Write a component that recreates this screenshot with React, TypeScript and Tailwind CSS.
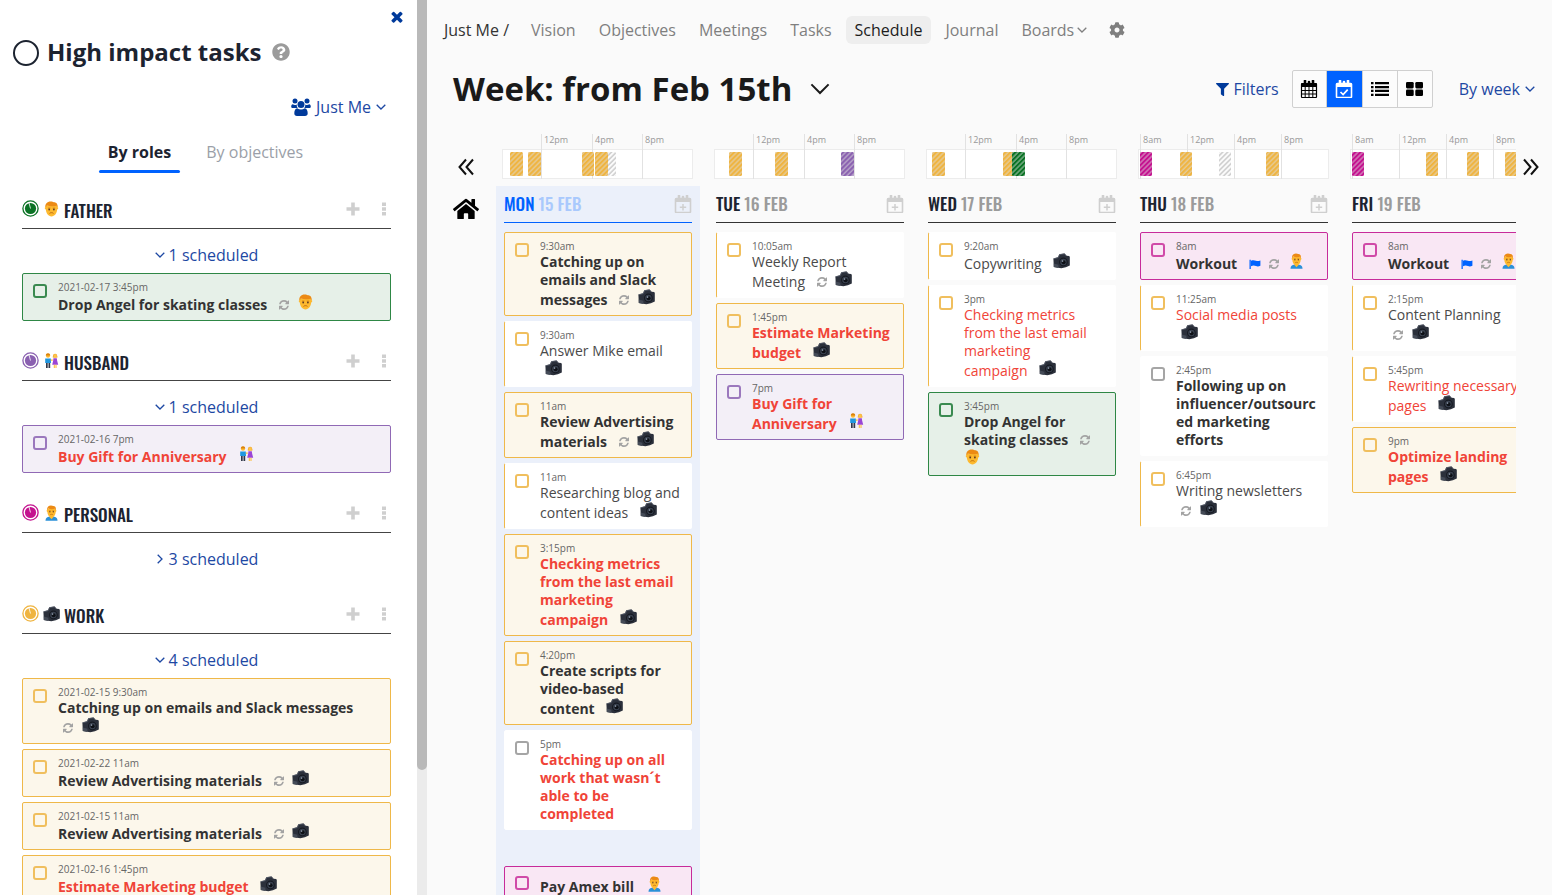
import { useState } from "react";
import type { ReactNode } from "react";
import clsx from "clsx";
import { FaCog, FaFilter, FaHome, FaQuestionCircle } from "react-icons/fa";

type Role = "work" | "father" | "husband" | "personal" | "none";

type Task = {
  time?: string;
  title: string;
  role: Role;
  important?: boolean; // filled card with a full border
  bold?: boolean;
  late?: boolean;
  repeat?: boolean;
  flag?: boolean;
  iconsBelow?: boolean;
};

type Day = {
  name: string;
  date: string;
  today?: boolean;
  marks: { x: number; label: string }[];
  blocks: { x: number; w: number; role: Role }[];
  tasks: Task[];
  untimed?: Task[];
};

const nineToMidnight = [
  { x: 39, label: "12pm" },
  { x: 90, label: "4pm" },
  { x: 140, label: "8pm" },
];

const eightToMidnight = [
  { x: 2, label: "8am" },
  { x: 49, label: "12pm" },
  { x: 96, label: "4pm" },
  { x: 143, label: "8pm" },
];

const days: Day[] = [
  {
    name: "MON",
    date: "15 FEB",
    today: true,
    marks: nineToMidnight,
    blocks: [
      { x: 8, w: 13, role: "work" },
      { x: 26, w: 13, role: "work" },
      { x: 80, w: 12, role: "work" },
      { x: 106, w: 8, role: "none" },
      { x: 93, w: 13, role: "work" },
    ],
    tasks: [
      { time: "9:30am", title: "Catching up on emails and Slack messages", role: "work", important: true, bold: true, repeat: true },
      { time: "9:30am", title: "Answer Mike email", role: "work", iconsBelow: true },
      { time: "11am", title: "Review Advertising materials", role: "work", important: true, bold: true, repeat: true },
      { time: "11am", title: "Researching blog and content ideas", role: "work" },
      { time: "3:15pm", title: "Checking metrics from the last email marketing\ncampaign", role: "work", important: true, bold: true, late: true },
      { time: "4:20pm", title: "Create scripts for video-based content", role: "work", important: true, bold: true },
      { time: "5pm", title: "Catching up on all work that wasn´t able to be completed", role: "none", bold: true, late: true },
    ],
    untimed: [{ title: "Pay Amex bill", role: "personal", important: true, bold: true }],
  },
  {
    name: "TUE",
    date: "16 FEB",
    marks: nineToMidnight,
    blocks: [
      { x: 15, w: 13, role: "work" },
      { x: 61, w: 13, role: "work" },
      { x: 127, w: 13, role: "husband" },
    ],
    tasks: [
      { time: "10:05am", title: "Weekly Report Meeting", role: "work", repeat: true },
      { time: "1:45pm", title: "Estimate Marketing budget", role: "work", important: true, bold: true, late: true },
      { time: "7pm", title: "Buy Gift for Anniversary", role: "husband", important: true, bold: true, late: true },
    ],
  },
  {
    name: "WED",
    date: "17 FEB",
    marks: nineToMidnight,
    blocks: [
      { x: 6, w: 13, role: "work" },
      { x: 77, w: 13, role: "work" },
      { x: 86, w: 13, role: "father" },
    ],
    tasks: [
      { time: "9:20am", title: "Copywriting", role: "work" },
      { time: "3pm", title: "Checking metrics from the last email marketing\ncampaign", role: "work", late: true },
      { time: "3:45pm", title: "Drop Angel for skating classes", role: "father", important: true, bold: true, repeat: true },
    ],
  },
  {
    name: "THU",
    date: "18 FEB",
    marks: eightToMidnight,
    blocks: [
      { x: 2, w: 12, role: "personal" },
      { x: 42, w: 12, role: "work" },
      { x: 81, w: 12, role: "none" },
      { x: 128, w: 13, role: "work" },
    ],
    tasks: [
      { time: "8am", title: "Workout", role: "personal", important: true, bold: true, flag: true, repeat: true },
      { time: "11:25am", title: "Social media posts", role: "work", late: true, iconsBelow: true },
      { time: "2:45pm", title: "Following up on influencer/outsourced marketing efforts", role: "none", bold: true },
      { time: "6:45pm", title: "Writing newsletters", role: "work", repeat: true, iconsBelow: true },
    ],
  },
  {
    name: "FRI",
    date: "19 FEB",
    marks: eightToMidnight,
    blocks: [
      { x: 2, w: 12, role: "personal" },
      { x: 76, w: 12, role: "work" },
      { x: 117, w: 12, role: "work" },
      { x: 155, w: 13, role: "work" },
    ],
    tasks: [
      { time: "8am", title: "Workout", role: "personal", important: true, bold: true, flag: true, repeat: true },
      { time: "2:15pm", title: "Content Planning", role: "work", repeat: true, iconsBelow: true },
      { time: "5:45pm", title: "Rewriting necessary pages", role: "work", late: true },
      { time: "9pm", title: "Optimize landing pages", role: "work", important: true, bold: true, late: true },
    ],
  },
];

const roles: { role: Role; name: string; count: number; open: boolean; tasks: Task[] }[] = [
  {
    role: "father",
    name: "FATHER",
    count: 1,
    open: true,
    tasks: [{ time: "2021-02-17 3:45pm", title: "Drop Angel for skating classes", role: "father", important: true, bold: true, repeat: true }],
  },
  {
    role: "husband",
    name: "HUSBAND",
    count: 1,
    open: true,
    tasks: [{ time: "2021-02-16 7pm", title: "Buy Gift for Anniversary", role: "husband", important: true, bold: true, late: true }],
  },
  { role: "personal", name: "PERSONAL", count: 3, open: false, tasks: [] },
  {
    role: "work",
    name: "WORK",
    count: 4,
    open: true,
    tasks: [
      { time: "2021-02-15 9:30am", title: "Catching up on emails and Slack messages", role: "work", important: true, bold: true, repeat: true, iconsBelow: true },
      { time: "2021-02-22 11am", title: "Review Advertising materials", role: "work", important: true, bold: true, repeat: true },
      { time: "2021-02-15 11am", title: "Review Advertising materials", role: "work", important: true, bold: true, repeat: true },
      { time: "2021-02-16 1:45pm", title: "Estimate Marketing budget", role: "work", important: true, bold: true, late: true },
    ],
  },
];

const roleColor: Record<Role, string> = {
  work: "#efb440",
  father: "#0b7325",
  husband: "#8a60b0",
  personal: "#c4128f",
  none: "#cfcfcf",
};

const cardFill: Record<Role, string> = {
  work: "border-[#efb849] bg-[#fcf7eb]",
  father: "border-[#2e8745] bg-[#e6f0e8]",
  husband: "border-[#9069b5] bg-[#f3eff7]",
  personal: "border-[#c72b9a] bg-[#f9e7f4]",
  none: "border-white bg-white",
};

const cardEdge: Record<Role, string> = {
  work: "border-white border-l-[#efb849] bg-white",
  father: "border-white border-l-[#2e8745] bg-white",
  husband: "border-white border-l-[#9069b5] bg-white",
  personal: "border-white border-l-[#c72b9a] bg-white",
  none: "border-white bg-white",
};

const boxBorder: Record<Role, string> = {
  work: "border-[#f0bf5e]",
  father: "border-[#3a8a50]",
  husband: "border-[#9b78bd]",
  personal: "border-[#d04aa8]",
  none: "border-[#a5a5a5]",
};

const roleText: Record<Role, string> = {
  work: "text-[#efb440]",
  father: "text-[#0b7325]",
  husband: "text-[#8a60b0]",
  personal: "text-[#c4128f]",
  none: "text-[#d4d4d4]",
};

const condensed = "font-['Oswald','Liberation_Sans_Narrow','Open_Sans',sans-serif]";

function Chevron({ className }: { className?: string }) {
  return (
    <svg viewBox="0 0 10 6" className={className} fill="none" stroke="currentColor" strokeWidth="1.3" aria-hidden="true">
      <path d="M.7.7 5 5 9.3.7" />
    </svg>
  );
}

function CameraIcon() {
  return (
    <svg viewBox="0 0 17 16" className="h-4 w-[17px]">
      <path d="M.4 5.600 5 4.200 6.300 1.200 11.600.5l1.900 2.200 2.700.3.600 1v8.600l-3.900 1.600-4.600 1L.8 14z" fill="#2b303b" />
      <path d="M.6 5.800 5.300 4.600l1.300-3L11.500.8l1.800 2.200" fill="none" stroke="#59606d" strokeWidth=".8" />
      <path d="m.8 10.500 4.600 1.300v3.100L.8 14z" fill="#444b57" />
      <circle cx="10.400" cy="9" r="4.400" fill="#161a22" />
      <circle cx="10.400" cy="9" r="3.200" fill="#39414f" />
      <circle cx="10.600" cy="9.200" r="2" fill="#0d1016" />
      <circle cx="9.600" cy="8.100" r=".8" fill="#98a4b5" />
    </svg>
  );
}

function Head() {
  return (
    <>
      <path d="M2.3 8.6C1 8.2.9 6.4 2.1 6.3L2 4.6h12l-.1 1.7c1.2.1 1.1 1.9-.2 2.3-.4 3.9-2.7 6.9-5.7 6.9s-5.300-3-5.700-6.900z" fill="#fdb92f" />
      <path d="M2.1 6.700C1.300 2.800 3.600.5 7.200.5c1.500 0 2.400.3 3.100.8 2.700-.1 4.300 2 3.600 5.400l-.9-2C9.400 5.600 6 5.400 3.300 4.500z" fill="#ec8a14" />
      <path d="M4.500 7.100h2.400M9.200 7.100h2.400" stroke="#d17a12" strokeWidth=".8" />
      <circle cx="5.700" cy="8.500" r=".9" fill="#5d3b23" />
      <circle cx="10.400" cy="8.500" r=".9" fill="#5d3b23" />
      <path d="M6 12.400c1-1 3-1 4 0" fill="none" stroke="#b8640f" strokeWidth=".9" />
    </>
  );
}

function FatherIcon() {
  return (
    <svg viewBox="0 0 16 16" className="h-4 w-[17px]">
      <Head />
    </svg>
  );
}

function PersonalIcon() {
  return (
    <svg viewBox="0 0 16 16" className="h-4 w-[17px]">
      <path d="M2 15.800c0-3 2-4.200 6-4.200s6 1.200 6 4.200z" fill="#2a90d8" />
      <path d="M5.700 11.700 8 14.200l2.300-2.500z" fill="#fdb92f" />
      <g transform="translate(2.200 0) scale(.73 .8)">
        <Head />
      </g>
    </svg>
  );
}

function CoupleIcon() {
  return (
    <svg viewBox="0 0 16 16" className="h-4 w-[17px]">
      <circle cx="4.500" cy="2.700" r="2.100" fill="#fdb92f" />
      <path d="M2.300 2.600C2.300-.4 6.700-.4 6.700 2.600z" fill="#d9820f" />
      <path d="M1.700 5.400h5.600l.2 4.600H1.700z" fill="#1f97e0" />
      <path d="M2.500 10h1.700v5H2.500zM5 10h1.700v5H5z" fill="#31394a" />
      <path d="M9.300 4.600C9-.6 14.200-.6 13.900 4.600z" fill="#e8920f" />
      <circle cx="11.600" cy="2.900" r="1.900" fill="#fdc24a" />
      <path d="M9.900 5.300h3.400l.3 2.200 1.100 4.300H8.700l1-4.300z" fill="#9a45d6" />
      <path d="M10.300 11.800h1v3.200h-1zM12 11.800h1v3.200h-1z" fill="#fdb92f" />
      <path d="M7.300 6.500h1.900v1.200H7.300z" fill="#fdb92f" />
    </svg>
  );
}

function RoleIcon({ role }: { role: Role }) {
  if (role === "work") return <CameraIcon />;
  if (role === "father") return <FatherIcon />;
  if (role === "husband") return <CoupleIcon />;
  if (role === "personal") return <PersonalIcon />;
  return null;
}

function RepeatIcon() {
  return (
    <svg viewBox="0 0 1536 1536" className="h-[10px] w-[10px]" fill="#a3a3a3">
      <path d="M1511 928q0 5-1 7-64 268-268 434.500t-478 166.500q-146 0-282.500-55t-243.500-157l-129 129q-19 19-45 19t-45-19-19-45v-448q0-26 19-45t45-19h448q26 0 45 19t19 45-19 45l-137 137q71 66 161 102t187 36q134 0 250-65t186-179q11-17 53-117 8-23 30-23h192q13 0 22.500 9.500t9.500 22.500zm25-800v448q0 26-19 45t-45 19h-448q-26 0-45-19t-19-45 19-45l138-138q-148-137-349-137-134 0-250 65t-186 179q-11 17-53 117-8 23-30 23h-199q-13 0-22.500-9.500t-9.500-22.500v-7q65-268 270-434.500t480-166.500q146 0 284 55.500t245 156.500l130-129q19-19 45-19t45 19 19 45z" />
    </svg>
  );
}

function FlagIcon() {
  return (
    <svg viewBox="0 0 12 10" className="h-[10px] w-3" fill="#0062ff">
      <path d="M.5.700h1.300V10H.5z" />
      <path d="M2 1.700c2-.8 3.500-.5 5 .1 1.400.5 2.700.3 4.400-.4v5.400c-1.700.8-3 .9-4.400.3-1.500-.6-3-.8-5 .1z" />
    </svg>
  );
}

function UsersIcon() {
  return (
    <svg viewBox="0 0 20 18" className="h-[18px] w-5" fill="#003a9b" aria-hidden="true">
      <circle cx="4" cy="3" r="2.500" />
      <circle cx="16" cy="3" r="2.500" />
      <path d="M1.800 6.200c1.200.9 2.800 1 4.100.2-.3 1.300 0 2.600.9 3.700H2C.8 10.100.200 9.500.200 8.700c0-1.200.500-2.500 1.600-2.500zM18.200 6.200c-1.200.9-2.800 1-4.100.2.3 1.300 0 2.600-.9 3.700H18c1.200 0 1.800-.6 1.800-1.400 0-1.200-.500-2.500-1.600-2.500z" />
      <circle cx="10" cy="6.400" r="3.500" />
      <path d="M6.200 10.200c2.300 1.700 5.300 1.700 7.600 0 2 .2 2.900 2.700 2.900 5 0 1.700-1 2.700-2.700 2.700H6c-1.700 0-2.700-1-2.700-2.700 0-2.300.9-4.800 2.900-5z" />
    </svg>
  );
}

function CalendarIcon({ mark, className }: { mark: "grid" | "check" | "plus"; className?: string }) {
  return (
    <svg viewBox="0 0 18 18" className={className} fill="none" stroke="currentColor" aria-hidden="true">
      <path d="M1.500 3h15v4h-15z" fill="currentColor" stroke="none" />
      <rect x="1.500" y="3.500" width="15" height="14" rx=".8" strokeWidth={mark === "grid" ? 1.200 : 1.600} />
      <path d="M5 .800v3.600M9 2v1M13 .800v3.600" strokeWidth="2.600" strokeLinecap="round" />
      {mark === "grid" && <path d="M5.200 7v10.500M9 7v10.500M12.800 7v10.500M1.500 10.500h15M1.500 14h15" strokeWidth="1" />}
      {mark === "check" && <path d="m5.500 12 2.600 2.600 4.600-5" strokeWidth="1.700" />}
      {mark === "plus" && <path d="M9 9v6.400M5.800 12.200h6.400" strokeWidth="1.500" />}
    </svg>
  );
}

function Glyph({ first, children }: { first?: boolean; children: ReactNode }) {
  return <span className={clsx("mr-[5px] inline-block align-baseline [&>svg]:block", first && "ml-[5px]")}>{children}</span>;
}

function TaskCard({ task }: { task: Task }) {
  const label = `${task.time ?? ""} ${task.title}`;
  return (
    <li
      className={clsx(
        "flex rounded-xs border pr-2 pb-[6px] pl-[10px]",
        task.time ? "pt-[6px]" : "pt-[9px]",
        task.important ? cardFill[task.role] : cardEdge[task.role],
      )}
    >
      <input
        type="checkbox"
        aria-label={label}
        className={clsx("h-[14px] w-[14px] shrink-0 appearance-none rounded-[3px] border-2 bg-transparent", task.time && "mt-1", boxBorder[task.role])}
      />
      <div className="ml-[11px] min-w-0 flex-1">
        {task.time && <div className="text-[10px] leading-[14px] text-[#666]">{task.time}</div>}
        <div
          className={clsx(
            "text-[14px] leading-[18px] break-words",
            task.bold && "font-bold",
            task.late ? "text-[#f04438]" : task.bold ? "text-[#333]" : "text-[#4a4a4a]",
          )}
        >
          <span className="pr-[3px] whitespace-pre-line">{task.title}</span> {task.iconsBelow && <br />}
          {task.flag && (
            <Glyph first>
              <FlagIcon />
            </Glyph>
          )}{" "}
          {task.repeat && (
            <Glyph first={!task.flag}>
              <RepeatIcon />
            </Glyph>
          )}{" "}
          {task.role !== "none" && (
            <Glyph first={!task.repeat}>
              <RoleIcon role={task.role} />
            </Glyph>
          )}
        </div>
      </div>
    </li>
  );
}

function Timeline({ day }: { day: Day }) {
  const id = `hatch-${day.name}`;
  return (
    <svg viewBox="0 0 192 46" className="mx-[6px] h-[46px] w-[192px] shrink-0">
      <defs>
        <pattern id={id} width="4" height="3.500" patternUnits="userSpaceOnUse" patternTransform="rotate(-45)">
          <path d="M0 1h4" stroke="#dcdcdc" strokeOpacity=".6" strokeWidth="1.300" />
        </pattern>
        <pattern id={`${id}-free`} width="4" height="3.500" patternUnits="userSpaceOnUse" patternTransform="rotate(-45)">
          <path d="M0 1h4" stroke="#fff" strokeWidth="1.800" />
        </pattern>
      </defs>
      <rect x=".5" y="15.500" width="190" height="29" fill="#fff" stroke="#ececec" />
      {day.marks.map((m) => (
        <g key={m.label}>
          <path d={`M${m.x}.500 0v45`} stroke="#e2e2e2" />
          <text x={m.x + 3} y="9" className="fill-[#999] text-[9px]">
            {m.label}
          </text>
        </g>
      ))}
      {day.blocks.map((b) => (
        <g key={b.x}>
          <rect x={b.x} y="18" width={b.w} height="24" rx="1.500" fill={roleColor[b.role]} />
          <rect x={b.x} y="18" width={b.w} height="24" rx="1.500" fill={b.role === "none" ? `url(#${id}-free)` : `url(#${id})`} />
        </g>
      ))}
    </svg>
  );
}

function DayColumn({ day }: { day: Day }) {
  return (
    <section className="mr-2 flex w-[204px] shrink-0 flex-col">
      <Timeline day={day} />
      <div className={clsx("mt-[6px] flex-1 px-2", day.today && "bg-[#ebf0fa]")}>
        <header className={clsx("flex h-[37px] items-center justify-between border-b", day.today ? "border-[#0062ff]" : "border-[#333]")}>
          <h2 className={clsx("text-[17px] leading-5 font-medium", condensed, day.today ? "text-[#0062ff]" : "text-[#1c2330]")}>
            {day.name} <span className={day.today ? "text-[#a9c9fd]" : "text-[#9b9b9b]"}>{day.date}</span>
          </h2>
          <button type="button" aria-label={`Add task on ${day.date}`} className="text-[#cfcfcf]">
            <CalendarIcon mark="plus" className="h-[18px] w-[18px]" />
          </button>
        </header>
        <ul className="mt-[9px] flex flex-col gap-[5px]">
          {day.tasks.map((t, i) => (
            <TaskCard key={i} task={t} />
          ))}
        </ul>
        {day.untimed && (
          <ul className="mt-9 flex flex-col gap-[5px]">
            {day.untimed.map((t, i) => (
              <TaskCard key={i} task={t} />
            ))}
          </ul>
        )}
      </div>
    </section>
  );
}

function RoleSection({ role, name, count, open: initial, tasks }: (typeof roles)[number]) {
  const [open, setOpen] = useState(initial);
  return (
    <section className="mb-6">
      <header className="flex h-9 items-center border-b border-[#444] pb-1">
        <svg viewBox="0 0 17 17" className={clsx("h-[17px] w-[17px]", roleText[role])}>
          <circle cx="8.500" cy="8.500" r="7.600" fill="none" stroke="currentColor" strokeWidth="1.300" />
          <circle cx="8.500" cy="8.500" r="5.600" fill="currentColor" />
          <path d="M8.500 8.500 7 3" stroke="#fff" strokeWidth=".8" />
        </svg>
        <span className="ml-1">
          <RoleIcon role={role} />
        </span>
        <h2 className={clsx("mt-1 ml-1 text-[17px] leading-5 font-medium text-[#1c2330]", condensed)}>{name}</h2>
        <button type="button" aria-label={`Add to ${name}`} className="ml-auto text-[#cfcfcf]">
          <svg viewBox="0 0 14 14" className="h-[14px] w-[14px]" fill="currentColor">
            <path d="M5.200.500h3.600v4.700h4.700v3.600H8.800v4.700H5.200V8.800H.500V5.200h4.700z" />
          </svg>
        </button>
        <button type="button" aria-label={`${name} options`} className="mr-[5px] ml-[22px] text-[#cfcfcf]">
          <svg viewBox="0 0 4 14" className="h-[14px] w-1" fill="currentColor">
            <path d="M0 .500h4v3.400H0zM0 5.300h4v3.400H0zM0 10.100h4v3.400H0z" />
          </svg>
        </button>
      </header>
      <button
        type="button"
        onClick={() => setOpen(!open)}
        className="flex h-[41px] w-full items-center justify-center gap-1 pt-[11px] text-[16px] text-[#1d48a3]"
      >
        <Chevron className={clsx("h-[6px] w-[10px]", !open && "-rotate-90")} />
        {count} scheduled
      </button>
      {open && (
        <ul className="flex flex-col gap-[5px] pt-[3px]">
          {tasks.map((t, i) => (
            <TaskCard key={i} task={t} />
          ))}
        </ul>
      )}
    </section>
  );
}

function Sidebar() {
  return (
    <aside className="flex w-[427px] shrink-0 overflow-hidden bg-white">
      <div className="min-w-0 flex-1 overflow-hidden">
        <div className="flex h-[34px] justify-end pt-[11px] pr-[14px]">
          <button type="button" aria-label="Close" className="h-3 text-[#003a9b]">
            <svg viewBox="290 290 1212 1284" className="h-3 w-3" fill="currentColor">
              <path d="M1490 1322q0 40-28 68l-136 136q-28 28-68 28t-68-28l-294-294-294 294q-28 28-68 28t-68-28l-136-136q-28-28-28-68t28-68l294-294-294-294q-28-28-28-68t28-68l136-136q28-28 68-28t68 28l294 294 294-294q28-28 68-28t68 28l136 136q28 28 28 68t-28 68l-294 294 294 294q28 28 28 68z" />
            </svg>
          </button>
        </div>
        <div className="flex h-9 items-center px-[13px]">
          <span className="mt-[2px] h-[26px] w-[26px] rounded-full border-2 border-[#1c2330]" />
          <h1 className="ml-2 text-[24px] leading-9 font-bold text-[#1c2330]">High impact tasks</h1>
          <FaQuestionCircle className="ml-[11px] text-[18px] text-[#9b9b9b]" />
        </div>
        <div className="mt-[22px] flex justify-end pr-[31px]">
          <button type="button" className="flex h-[30px] items-center gap-[5px] text-[16px] text-[#1d48a3]">
            <UsersIcon />
            Just Me
            <Chevron className="h-[6px] w-[10px]" />
          </button>
        </div>
        <div className="mt-3 flex justify-center gap-[17px] pr-[6px]" role="tablist">
          <button type="button" role="tab" aria-selected="true" className="flex flex-col">
            <span className="px-[9px] text-[16px] leading-9 font-bold text-[#1c2330]">By roles</span>
            <span className="h-[3px] w-full rounded-full bg-[#0062ff]" />
          </button>
          <button type="button" role="tab" aria-selected="false" className="flex flex-col">
            <span className="px-[9px] text-[16px] leading-9 text-[#9b9fa8]">By objectives</span>
          </button>
        </div>
        <div className="mt-5 pr-[26px] pl-[22px]">
          {roles.map((r) => (
            <RoleSection key={r.name} {...r} />
          ))}
        </div>
      </div>
      <div className="w-[10px] bg-[#ebebeb]">
        <div className="h-[86%] rounded-b-full bg-[#b9b9b9]" />
      </div>
    </aside>
  );
}

const navItems = ["Vision", "Objectives", "Meetings", "Tasks", "Schedule", "Journal"];

function Nav() {
  return (
    <nav className="flex h-7 items-center gap-[5px] pl-[17px] text-[16px] text-[#7f7f7f]">
      <a href="#team" className="mr-2 text-[#333]">
        Just Me /
      </a>
      {navItems.map((item) => (
        <a
          key={item}
          href={`#${item.toLowerCase()}`}
          className={clsx("rounded-md px-[9px] leading-7", item === "Schedule" && "bg-[#eee] text-[#1c1c1c]")}
        >
          {item}
        </a>
      ))}
      <button type="button" className="flex items-center gap-[3px] px-[9px]">
        Boards
        <Chevron className="h-[6px] w-[10px]" />
      </button>
      <button type="button" aria-label="Settings" className="ml-2 text-[#7f7f7f]">
        <FaCog className="text-[16px]" />
      </button>
    </nav>
  );
}

function Toolbar() {
  return (
    <div className="mt-5 flex h-[50px] items-center pr-[17px] pl-[26px]">
      <h1 className="text-[33px] leading-[50px] font-bold text-[#1a1a1a]">Week: from Feb 15th</h1>
      <button type="button" aria-label="Choose week" className="ml-[18px] text-[#1a1a1a]">
        <Chevron className="h-3 w-5 stroke-1" />
      </button>
      <button type="button" className="mr-[13px] ml-auto flex items-center gap-[5px] text-[16px] text-[#1d48a3]">
        <FaFilter className="text-[13px] text-[#003a9b]" />
        Filters
      </button>
      <div className="flex h-[38px] divide-x divide-[#d0d0d0] rounded-xs border border-[#d0d0d0] bg-[#fcfcfc] text-black">
        <button type="button" aria-label="Month" className="flex w-[34px] items-center justify-center">
          <CalendarIcon mark="grid" className="h-[18px] w-[18px]" />
        </button>
        <button type="button" aria-label="Week" className="flex w-[36px] items-center justify-center bg-[#0062ff] text-white">
          <CalendarIcon mark="check" className="h-[18px] w-[18px]" />
        </button>
        <button type="button" aria-label="List" className="flex w-[35px] items-center justify-center">
          <svg viewBox="0 0 18 14" className="h-[14px] w-[18px]" fill="currentColor">
            <path d="M0 0h2.500v2.300H0zM0 3.900h2.500v2.300H0zM0 7.800h2.500v2.300H0zM0 11.700h2.500V14H0zM4 0h14v2.300H4zM4 3.900h14v2.300H4zM4 7.800h14v2.300H4zM4 11.700h14V14H4z" />
          </svg>
        </button>
        <button type="button" aria-label="Board" className="flex w-[34px] items-center justify-center">
          <svg viewBox="0 0 17 14" className="h-[14px] w-[17px]" fill="currentColor">
            <rect width="7.700" height="6.400" rx="1.300" />
            <rect x="9.300" width="7.700" height="6.400" rx="1.300" />
            <rect y="7.600" width="7.700" height="6.400" rx="1.300" />
            <rect x="9.300" y="7.600" width="7.700" height="6.400" rx="1.300" />
          </svg>
        </button>
      </div>
      <button type="button" className="ml-[26px] flex items-center gap-[5px] text-[16px] text-[#1d48a3]">
        By week
        <Chevron className="h-[6px] w-[10px]" />
      </button>
    </div>
  );
}

export default function App() {
  return (
    <div className="flex h-screen overflow-hidden bg-[#fafafa] font-['Open_Sans',sans-serif]">
      <Sidebar />
      <main className="flex min-w-0 flex-1 flex-col pt-4">
        <Nav />
        <Toolbar />
        <div className="mt-5 flex min-h-0 flex-1">
          <div className="flex w-[69px] shrink-0 flex-col items-center gap-5 pt-6 pl-2">
            <button type="button" aria-label="Previous week">
              <svg viewBox="0 0 16 18" className="h-[18px] w-4" fill="none" stroke="#111" strokeWidth="2">
                <path d="M8 1.500 1.500 9 8 16.500M15 1.500 8.500 9 15 16.500" />
              </svg>
            </button>
            <button type="button" aria-label="This week">
              <FaHome className="text-[26px]" />
            </button>
          </div>
          <div className="flex min-w-0 flex-1 overflow-hidden">
            {days.map((d) => (
              <DayColumn key={d.name} day={d} />
            ))}
          </div>
          <div className="w-9 shrink-0 pt-6 pl-[7px]">
            <button type="button" aria-label="Next week">
              <svg viewBox="0 0 16 18" className="h-[18px] w-4" fill="none" stroke="#111" strokeWidth="2">
                <path d="M1 1.500 7.500 9 1 16.500M8 1.500 14.500 9 8 16.500" />
              </svg>
            </button>
          </div>
        </div>
      </main>
    </div>
  );
}
